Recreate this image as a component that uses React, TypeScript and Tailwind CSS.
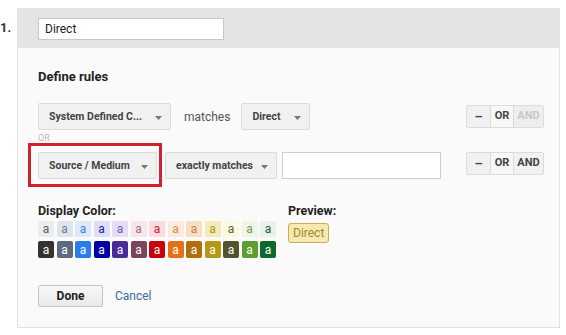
import React from "react";

const light = [
  ["#ececec", "#5f5f5f"],
  ["#dfe4ec", "#6f7a8c"],
  ["#dde9fb", "#3a7ee6"],
  ["#dedff6", "#1c1ca8"],
  ["#e6dcf6", "#7a56c2"],
  ["#f8e6ee", "#a06a80"],
  ["#fadcdf", "#c8202e"],
  ["#fcebdd", "#e4874a"],
  ["#f8dfbf", "#bf8742"],
  ["#f5ebb6", "#ab9431"],
  ["#fafadc", "#5e5e3e"],
  ["#eef6e6", "#6b9b5b"],
  ["#e6f2ea", "#1f5c3e"],
];

const dark = [
  "#333333",
  "#5e6a80",
  "#2a7de8",
  "#0000a6",
  "#4b2b98",
  "#784658",
  "#c8000e",
  "#e6701a",
  "#b36e0c",
  "#b39a12",
  "#54542c",
  "#5e9e2e",
  "#0b6a2c",
];

function Caret() {
  return (
    <svg width="7" height="4" viewBox="0 0 7 4" className="shrink-0 mt-[2px]">
      <path d="M0 0h7L3.5 4z" fill="#777" />
    </svg>
  );
}

function Select({ label, w }: { label: string; w: string }) {
  return (
    <div
      className={`${w} h-[27px] flex items-center justify-between pl-[10px] pr-[8px] bg-[#f1f1f1] border border-[#dcdcdc] rounded-[2px] text-[10.5px] font-bold text-[#444]`}
    >
      <span>{label}</span>
      <Caret />
    </div>
  );
}

function Ops({ andOn }: { andOn: boolean }) {
  return (
    <div className="flex h-[23px] border border-[#dcdcdc] rounded-[2px] bg-[#f1f1f1] text-[11px] font-bold text-[#444]">
      <div className="w-[24px] flex items-center justify-center border-r border-[#dcdcdc] text-[13px]">–</div>
      <div className="w-[23px] flex items-center justify-center border-r border-[#dcdcdc] bg-[#f7f7f7]">OR</div>
      <div className={`w-[29px] flex items-center justify-center ${andOn ? "text-[#444]" : "text-[#c8c8c8] bg-[#eeeeee]"}`}>AND</div>
    </div>
  );
}

export default function App() {
  return (
    <div className="w-[566px] h-[335px] bg-white flex pt-[8px] font-['Roboto',sans-serif] text-[#222]">
      <div className="w-[17px] pt-[10px] text-[13px] font-bold text-[#333]">1.</div>
      <div className="w-[543px] h-[320px] flex flex-col border-l border-b border-r border-[#e2e2e2] bg-[#fafafa]">
        <div className="h-[40px] bg-[#e4e4e4] pl-[20px] pt-[10px]">
          <div className="w-[186px] h-[22px] bg-white border border-[#c8c8c8] flex items-center pl-[6px] text-[12px] text-[#222]">
            Direct
          </div>
        </div>
        <div className="flex flex-col pl-[20px] pr-[15px] pt-[21px]">
          <div className="text-[13px] font-bold leading-[16px] text-[#222]">Define rules</div>

          <div className="mt-[18px] flex items-start justify-between">
            <div className="flex items-center">
              <Select label="System Defined C..." w="w-[133px]" />
              <span className="ml-[13px] mr-[11px] text-[12px] text-[#555]">matches</span>
              <Select label="Direct" w="w-[69px]" />
            </div>
            <div className="mt-[2px]">
              <Ops andOn={false} />
            </div>
          </div>

          <div className="mt-[2px] h-[20px] text-[9px] leading-[12px] text-[#bbb]">OR</div>

          <div className="relative flex items-start justify-between">
            <div className="absolute left-[-10px] top-[-9px] w-[134px] h-[44px] border-[3px] border-[#d0222c]" />
            <div className="flex items-center gap-[8px]">
              <Select label="Source / Medium" w="w-[119px]" />
              <Select label="exactly matches" w="w-[112px]" />
              <div className="ml-[-3px] w-[159px] h-[27px] bg-white border border-[#cfcfcf]" />
            </div>
            <Ops andOn={true} />
          </div>

          <div className="mt-[24px] flex">
            <div className="w-[250px]">
              <div className="text-[12.5px] font-bold leading-[15px] text-[#222]">Display Color:</div>
              <div className="mt-[3px] flex gap-[2.5px]">
                {light.map(([bg, fg], i) => (
                  <div
                    key={i}
                    className="w-[16px] h-[16px] flex items-center justify-center text-[12px] leading-none rounded-[1px]"
                    style={{ backgroundColor: bg, color: fg }}
                  >
                    a
                  </div>
                ))}
              </div>
              <div className="mt-[4px] flex gap-[2.5px]">
                {dark.map((bg, i) => (
                  <div
                    key={i}
                    className="w-[16px] h-[17px] flex items-center justify-center text-[12px] leading-none text-white rounded-[2px]"
                    style={{ backgroundColor: bg }}
                  >
                    a
                  </div>
                ))}
              </div>
            </div>
            <div>
              <div className="text-[12.5px] font-bold leading-[15px] text-[#222]">Preview:</div>
              <div className="mt-[5px] inline-flex h-[20px] items-center px-[4px] bg-[#f7e9b0] border border-[#c9ae5a] rounded-[3px] text-[12px] text-[#a08a2e]">
                Direct
              </div>
            </div>
          </div>

          <div className="mt-[27px] flex items-center">
            <div className="w-[65px] h-[22px] flex items-center justify-center border border-[#c6c6c6] rounded-[2px] bg-gradient-to-b from-[#f8f8f8] to-[#e9e9e9] text-[12px] font-bold text-[#222]">
              Done
            </div>
            <span className="ml-[12px] text-[12px] text-[#3b6b96]">Cancel</span>
          </div>
        </div>
      </div>
    </div>
  );
}
